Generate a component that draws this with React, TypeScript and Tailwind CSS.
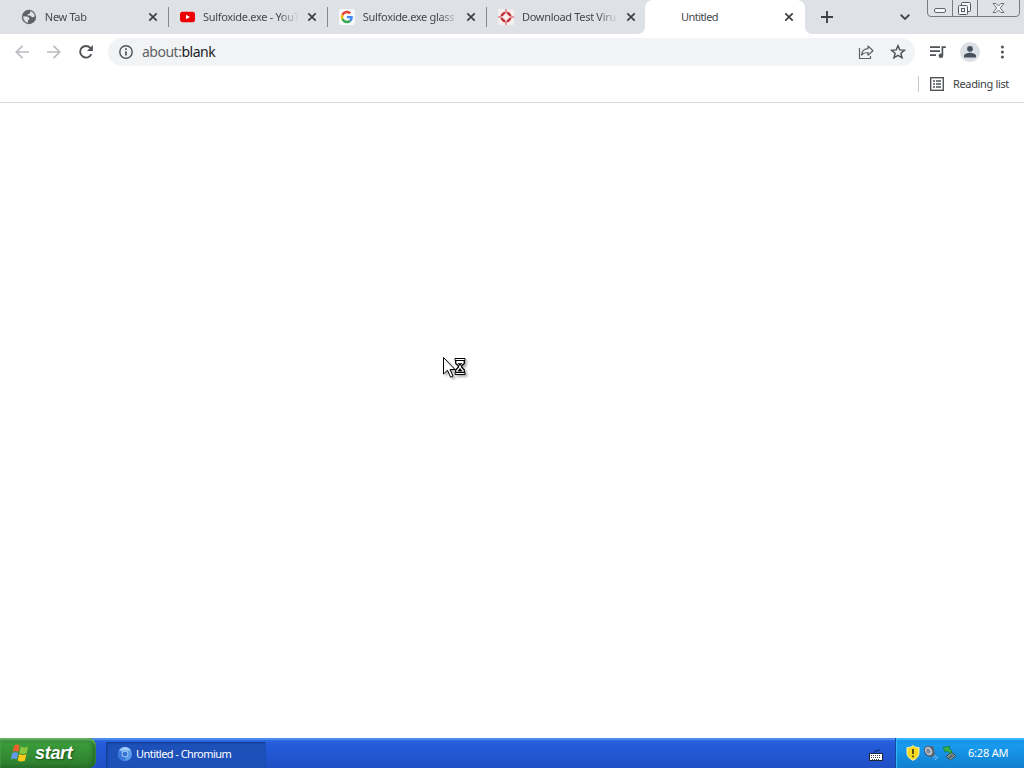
import * as React from 'react'
import { clsx } from 'clsx'

interface IconProps {
  className?: string
}

function CloseIcon({ className }: IconProps) {
  return (
    <svg viewBox="0 0 10 10" className={clsx('h-[10px] w-[10px] flex-shrink-0', className)}>
      <path d="M1.300 1.300 8.700 8.700M8.700 1.300 1.300 8.700" stroke="#3c4043" strokeWidth="1.700" fill="none" />
    </svg>
  )
}

function GlobeIcon() {
  return (
    <svg viewBox="0 0 16 16" className="h-4 w-4">
      <circle cx="8" cy="8" r="7.200" fill="#5f6368" />
      <path
        d="M9.200 2.200c2.600.4 4.500 2.600 4.700 5.100-.8.9-2 1.200-3 .7-.8-.4-1-1.400-1.900-1.500H6.700c0-1.300.6-1.700 1.700-1.800.8-.1.9-.8.8-2.500ZM2.300 7.300l3.400.1c1.500.1 2.600 1 2.700 2.300.1.900-.4 1.300-1.300 1.300v2.800C4.200 13.500 1.900 10.700 2.300 7.300Z"
        fill="#dee1e6"
      />
    </svg>
  )
}

function YouTubeIcon() {
  return (
    <svg viewBox="0 0 16 16" className="h-4 w-4">
      <rect x="0" y="2.500" width="16" height="11" rx="2.600" fill="#ee0000" />
      <path d="M6.400 5.600v4.800L10.600 8Z" fill="#fff" />
    </svg>
  )
}

function GoogleIcon() {
  return (
    <svg viewBox="0 0 16 16" className="h-4 w-4">
      <rect width="16" height="16" rx="2" fill="#f7f8fa" />
      <g transform="translate(1.800 1.800) scale(.258)">
        <path fill="#EA4335" d="M24 9.500c3.540 0 6.710 1.220 9.210 3.600l6.850-6.850C35.900 2.380 30.470 0 24 0 14.620 0 6.510 5.380 2.560 13.220l7.980 6.190C12.430 13.720 17.740 9.500 24 9.500z" />
        <path fill="#4285F4" d="M46.980 24.550c0-1.570-.15-3.090-.38-4.550H24v9.020h12.940c-.58 2.960-2.260 5.480-4.780 7.180l7.730 6c4.510-4.180 7.090-10.360 7.090-17.650z" />
        <path fill="#FBBC05" d="M10.530 28.590c-.48-1.450-.76-2.990-.76-4.590s.27-3.140.76-4.590l-7.980-6.190C.92 16.460 0 20.120 0 24s.92 7.540 2.560 10.780l7.970-6.190z" />
        <path fill="#34A853" d="M24 48c6.480 0 11.930-2.130 15.890-5.810l-7.730-6c-2.150 1.450-4.920 2.300-8.160 2.300-6.260 0-11.570-4.220-13.470-9.910l-7.980 6.190C6.510 42.620 14.620 48 24 48z" />
      </g>
    </svg>
  )
}

function TargetIcon() {
  return (
    <svg viewBox="0 0 16 16" className="h-4 w-4">
      <rect width="16" height="16" rx="1" fill="#f5eeee" />
      <circle cx="8" cy="8" r="4.300" fill="none" stroke="#c53338" strokeWidth="2.600" />
      <path d="M8 2.500v11M2.500 8h11" stroke="#f8eeee" strokeWidth="1.800" />
      <path d="M8 0v4.500M8 11.500V16M0 8h4.500M11.500 8H16" stroke="#c8494c" strokeWidth="1" />
    </svg>
  )
}

interface Tab {
  title: string
  icon: React.ReactNode
  divider: boolean
}

const tabs: Tab[] = [
  { title: 'New Tab', icon: <GlobeIcon />, divider: true },
  { title: 'Sulfoxide.exe - YouT', icon: <YouTubeIcon />, divider: true },
  { title: 'Sulfoxide.exe glass', icon: <GoogleIcon />, divider: true },
  { title: 'Download Test Viru', icon: <TargetIcon />, divider: false },
]

function BrowserTab({ title, icon, divider }: Tab) {
  return (
    <div className="flex h-[34px] w-[159px] flex-shrink-0 items-center pl-[11px]">
      {icon}
      <span className="ml-2 w-24 whitespace-nowrap text-[11px] leading-4 tracking-[-0.32px] text-[#45494d] [mask-image:linear-gradient(to_right,black_76px,transparent_96px)]">
        {title}
      </span>
      <CloseIcon className="ml-2" />
      {divider && <div className="ml-[10px] h-5 w-px bg-[#85888d]" />}
    </div>
  )
}

function WindowControls() {
  return (
    <svg viewBox="0 0 94 18" className="h-[18px] w-[94px]">
      <path d="M.5 0v13q0 3.500 3.500 3.500h85q3.500 0 3.500-3.500V0" fill="#e0e2e7" stroke="#777b83" />
      <path d="M25.500 0v16M50.500 0v16" stroke="#777b83" />
      <rect x="7.500" y="8.500" width="11" height="4" rx="1.500" fill="#f5f6f8" stroke="#62666f" />
      <g fill="#f5f6f8" stroke="#555a64">
        <rect x="34.500" y="2.500" width="9" height="9" rx="1" />
        <rect x="31.500" y="5.500" width="9" height="9" rx="1" />
        <rect x="34.500" y="8.500" width="3" height="3" />
      </g>
      <path
        d="M66 3.500h3.200L71.500 6l2.300-2.500H77L73.300 8l3.700 4.500h-3.200L71.500 10l-2.300 2.500H66L69.700 8Z"
        fill="#f5f6f8"
        stroke="#62666f"
        strokeWidth=".9"
      />
    </svg>
  )
}

function TabStrip() {
  return (
    <div className="flex h-[34px] items-center bg-[#dee1e6] pl-[9px]">
      <div className="flex w-[636px] flex-shrink-0 pl-px">
        {tabs.map((tab) => (
          <BrowserTab key={tab.title} {...tab} />
        ))}
      </div>
      <div className="relative flex h-[34px] w-[160px] flex-shrink-0 items-center rounded-t-lg bg-white pl-9">
        <svg viewBox="0 0 8 8" className="absolute bottom-0 -left-2 h-2 w-2">
          <path d="M8 0v8H0Q8 8 8 0Z" fill="#fff" />
        </svg>
        <svg viewBox="0 0 8 8" className="absolute -right-2 bottom-0 h-2 w-2">
          <path d="M0 0v8h8Q0 8 0 0Z" fill="#fff" />
        </svg>
        <span className="w-[94px] text-[11px] leading-4 tracking-[-0.55px] text-[#45494d]">Untitled</span>
        <CloseIcon className="ml-[9px]" />
      </div>
      <svg viewBox="0 0 12 12" className="ml-4 h-3 w-3">
        <path d="M6 0v12M0 6h12" stroke="#3c4043" strokeWidth="1.900" />
      </svg>
      <svg viewBox="0 0 10 6" className="ml-[67px] h-[6px] w-[10px]">
        <path d="m.7.700 4.300 4.200L9.300.700" fill="none" stroke="#45494d" strokeWidth="1.900" />
      </svg>
      <div className="ml-[17px] self-start">
        <WindowControls />
      </div>
    </div>
  )
}

function Toolbar() {
  return (
    <div className="flex h-9 items-center bg-white pl-[15px]">
      <svg viewBox="0 0 14 14" className="h-[14px] w-[14px]">
        <path d="M14 7H1.500M7.500.800 1.300 7l6.200 6.200" fill="none" stroke="#b9bbbe" strokeWidth="1.700" />
      </svg>
      <svg viewBox="0 0 14 14" className="ml-[18px] h-[14px] w-[14px]">
        <path d="M0 7h12.500M6.500.800 12.700 7l-6.200 6.200" fill="none" stroke="#b9bbbe" strokeWidth="1.700" />
      </svg>
      <svg viewBox="0 0 14 14" className="ml-[18px] h-[14px] w-[14px]">
        <path d="M12.300 9.100A5.800 5.800 0 1 1 11.400 3L12.500 4.500" fill="none" stroke="#505458" strokeWidth="1.900" />
        <path d="M13.900 0v6H8Z" fill="#505458" />
      </svg>
      <div className="ml-[15px] flex h-7 w-[807px] items-center rounded-full bg-[#f1f3f4] pl-[11px]">
        <svg viewBox="0 0 14 14" className="h-[14px] w-[14px]">
          <circle cx="7" cy="7" r="6.200" fill="none" stroke="#505458" strokeWidth="1.400" />
          <path d="M7 6.200v4.300M7 3.300v1.700" stroke="#505458" strokeWidth="1.700" />
        </svg>
        <span className="ml-[9px] w-[716px] text-[14px] leading-5 tracking-[-0.5px] text-[#5f6368]">
          about:<span className="text-[#202124]">blank</span>
        </span>
        <svg viewBox="0 0 16 16" className="h-4 w-4">
          <path
            d="M1.500 4v10.500h11V12M3.500 11C4 7 6 4.800 10 4.600V2l5 4.700-5 4.500V8.500C7 8.400 5 9.200 3.500 11Z"
            fill="none"
            stroke="#5f6368"
            strokeWidth="1.200"
            strokeLinejoin="round"
          />
        </svg>
        <svg viewBox="0 0 16 16" className="ml-4 h-4 w-4">
          <path
            d="m8 1.700 1.800 4.200 4.600.4-3.500 3 1.100 4.500L8 11.400l-4 2.400 1.100-4.500-3.500-3 4.600-.4Z"
            fill="none"
            stroke="#505458"
            strokeWidth="1.500"
          />
        </svg>
      </div>
      <svg viewBox="0 0 18 14" className="ml-[14px] h-[14px] w-[18px]">
        <path d="M1 2.200h10M1 6.200h10M1 10.200h6" stroke="#505458" strokeWidth="1.700" />
        <path d="M13.400 10.500V2.100h3.400" fill="none" stroke="#505458" strokeWidth="1.700" />
        <circle cx="11.900" cy="10.700" r="2.300" fill="#505458" />
      </svg>
      <svg viewBox="0 0 20 20" className="ml-[13px] h-5 w-5">
        <circle cx="10" cy="10" r="10" fill="#dcdfe3" />
        <circle cx="10" cy="6.800" r="2.900" fill="#47515e" />
        <path d="M4 15.500v-1.700c0-2 4-3 6-3s6 1 6 3v1.700Z" fill="#47515e" />
      </svg>
      <svg viewBox="0 0 4 14" className="ml-5 h-[14px] w-1">
        <g fill="#505458">
          <circle cx="2.400" cy="2" r="1.500" />
          <circle cx="2.400" cy="7" r="1.500" />
          <circle cx="2.400" cy="12" r="1.500" />
        </g>
      </svg>
    </div>
  )
}

function BookmarksBar() {
  return (
    <div className="flex h-[33px] items-center justify-end border-b border-[#d5d7da] bg-white pr-[15px] pb-1">
      <div className="h-4 w-px bg-[#c4c6ca]" />
      <svg viewBox="0 0 14 14" className="ml-[11px] h-[14px] w-[14px]">
        <rect x=".7" y=".7" width="12.600" height="12.600" fill="none" stroke="#505458" strokeWidth="1.400" />
        <path d="M3 4h2M3 7h2M3 10h2M6 4h5M6 7h5M6 10h5" stroke="#505458" strokeWidth="1.400" />
      </svg>
      <span className="ml-[9px] w-14 whitespace-nowrap text-[11px] leading-4 tracking-[-0.35px] text-[#3c4043]">
        Reading list
      </span>
    </div>
  )
}

// Arrow with the small "working in background" hourglass
function BusyCursor() {
  return (
    <svg
      viewBox="0 0 26 22"
      className="absolute top-[357px] left-[443px] h-[22px] w-[26px] drop-shadow-[2px_2px_1px_rgba(0,0,0,0.3)]"
    >
      <path d="M.5.500v16.500l4-3.800 3 7 2.500-1.100-3-6.600h5Z" fill="#fff" stroke="#000" />
      <path
        d="M12.700 3v3.500L15.500 9v1L12.700 13v3.500h8.600V13L18.500 10V9l2.800-2.500V3Z"
        fill="#fff"
        stroke="#000"
        strokeWidth="1.300"
      />
      <path d="M12 1.500h10v2H12ZM12 15.500h10v2H12Z" fill="#fff" stroke="#000" />
      <path d="M14.500 6.300h5L17 9ZM17 11l2.700 3.500h-5.400Z" fill="#000" />
    </svg>
  )
}

function StartButton() {
  return (
    <div className="flex h-[30px] w-24 items-center rounded-r-[8px] bg-linear-to-b from-[#377e37] via-[#3b9b3a] via-20% to-[#2d7c2d] pl-[10px] shadow-[inset_0_2px_2px_#69b569,inset_-3px_-2px_4px_#236b26]">
      <svg viewBox="0 0 20 20" className="h-5 w-5">
        <path d="M4.200 2.600C6.300 1 8 1.300 9.700 2.600L8.400 8.900C6.500 7.600 4.700 7.600 2.700 8.900Z" fill="#f0602c" />
        <path d="M10.700 3.400c2.300 1.500 4.800 1.400 7.500 0l-1.500 6.500c-2.500 1.400-4.900 1.400-7.300 0Z" fill="#8cc63f" />
        <path d="M2.300 10.200c2.200-1.300 4-1.300 5.800 0l-1.400 6.300C5 15.200 3 15.200.8 16.500Z" fill="#6499ee" />
        <path d="M9.100 11c2.500 1.400 4.900 1.400 7.300 0L15 17.500c-2.400 1.300-4.800 1.300-7.300 0Z" fill="#fbc91b" />
      </svg>
      <span className="ml-[5px] font-['Liberation_Sans',sans-serif] text-[18px] leading-6 font-bold tracking-[-0.3px] text-white italic [text-shadow:1px_1px_2px_#174d17]">
        start
      </span>
    </div>
  )
}

function ChromiumIcon() {
  return (
    <svg viewBox="0 0 14 14" className="h-[14px] w-[14px]">
      <circle cx="7" cy="7" r="7" fill="#5b9cec" />
      <path d="M7 7 1 3.400A7 7 0 0 0 6 13.900l3-5.700Z" fill="#3a79da" />
      <path d="M1 3.400A7 7 0 0 1 13 3.500H7Z" fill="#a3cbf8" />
      <circle cx="7" cy="7" r="3.300" fill="#b5d4f8" />
      <circle cx="7" cy="7" r="2.500" fill="#3474d4" />
    </svg>
  )
}

function TrayIcons() {
  return (
    <div className="flex items-center gap-[3px]">
      <svg viewBox="0 0 14 16" className="h-4 w-[14px]">
        <path
          d="M7 .7C5 2.200 3.200 2.600 1 2.500v5.300c0 3.600 2.500 6 6 7.500 3.500-1.500 6-3.900 6-7.500V2.500C10.800 2.600 9 2.200 7 .7Z"
          fill="#f6da22"
          stroke="#f8f3b0"
        />
        <path d="M7 4v5M7 10.500v1.800" stroke="#40380a" strokeWidth="1.700" />
      </svg>
      <svg viewBox="0 0 16 16" className="h-4 w-4">
        <path d="M5 1 10.500 1.500 12 9.500 8.500 12.500 3 10Z" fill="#5c6572" />
        <ellipse cx="5.700" cy="6" rx="4" ry="5" fill="#b9bfc9" stroke="#4a5362" transform="rotate(-30 5.700 6)" />
        <ellipse cx="5.300" cy="6" rx="1.800" ry="2.500" fill="#7d8694" transform="rotate(-30 5.300 6)" />
        <path d="M10 13.300q2-.7 2.500-3M12 15q2-1.200 2.700-3.700" fill="none" stroke="#91c7f2" />
      </svg>
      <svg viewBox="0 0 15 16" className="h-4 w-[15px]">
        <path d="m4 11.500 5.500-4 4.500 3-5.500 4.500Z" fill="#9eb0ae" stroke="#34484e" />
        <path d="M5.500 12 9.800 9l2.500 1.500-4 3.200Z" fill="#5d6c6c" />
        <path d="M1.200 2.500 7.800 1 7 3.200l2.500 2.500L9 9 4.800 5.700 3.200 7.200Z" fill="#3cb449" stroke="#167b2a" strokeWidth=".8" />
      </svg>
    </div>
  )
}

function Taskbar() {
  return (
    <div className="flex h-[30px] flex-shrink-0 items-center bg-linear-to-b from-[#2e6bdf] via-[#245cdc] via-20% to-[#1f50c4] shadow-[inset_0_2px_1px_#4b8ef1]">
      <StartButton />
      <div className="mt-[3px] ml-[10px] flex h-[26px] w-[160px] items-center rounded-[2px] bg-[#1d50b8] pl-3 pb-px shadow-[inset_1px_1px_2px_#10378b]">
        <ChromiumIcon />
        <span className="ml-1 whitespace-nowrap text-[11px] leading-4 tracking-[-0.55px] text-white">Untitled - Chromium</span>
      </div>
      <svg viewBox="0 0 14 12" className="mt-1 ml-auto h-3 w-[14px]">
        <path d="M5.500 3.500V2h3V1H11" fill="none" stroke="#102d73" />
        <rect x=".5" y="4.500" width="13" height="7" fill="#fff" stroke="#202636" />
        <path d="M2 6.500h10M2 8.500h10M3 10.500h8" stroke="#39404b" strokeDasharray="1 1" />
      </svg>
      <div className="ml-3 flex h-[30px] w-[129px] items-center border-l border-[#104b9f] bg-linear-to-b from-[#1a8de5] via-[#189aef] via-25% to-[#1180cf] pl-[10px] shadow-[inset_1px_2px_1px_#38b9f8]">
        <TrayIcons />
        <span className="ml-[11px] whitespace-nowrap text-[11px] leading-4 tracking-[-0.2px] text-white">6:28 AM</span>
      </div>
    </div>
  )
}

export default function App() {
  return (
    <div className="relative flex h-[768px] w-[1024px] flex-col overflow-hidden bg-white font-['Noto_Sans','Open_Sans',sans-serif]">
      <TabStrip />
      <Toolbar />
      <BookmarksBar />
      <main className="flex-1 bg-white" />
      <BusyCursor />
      <Taskbar />
    </div>
  )
}
